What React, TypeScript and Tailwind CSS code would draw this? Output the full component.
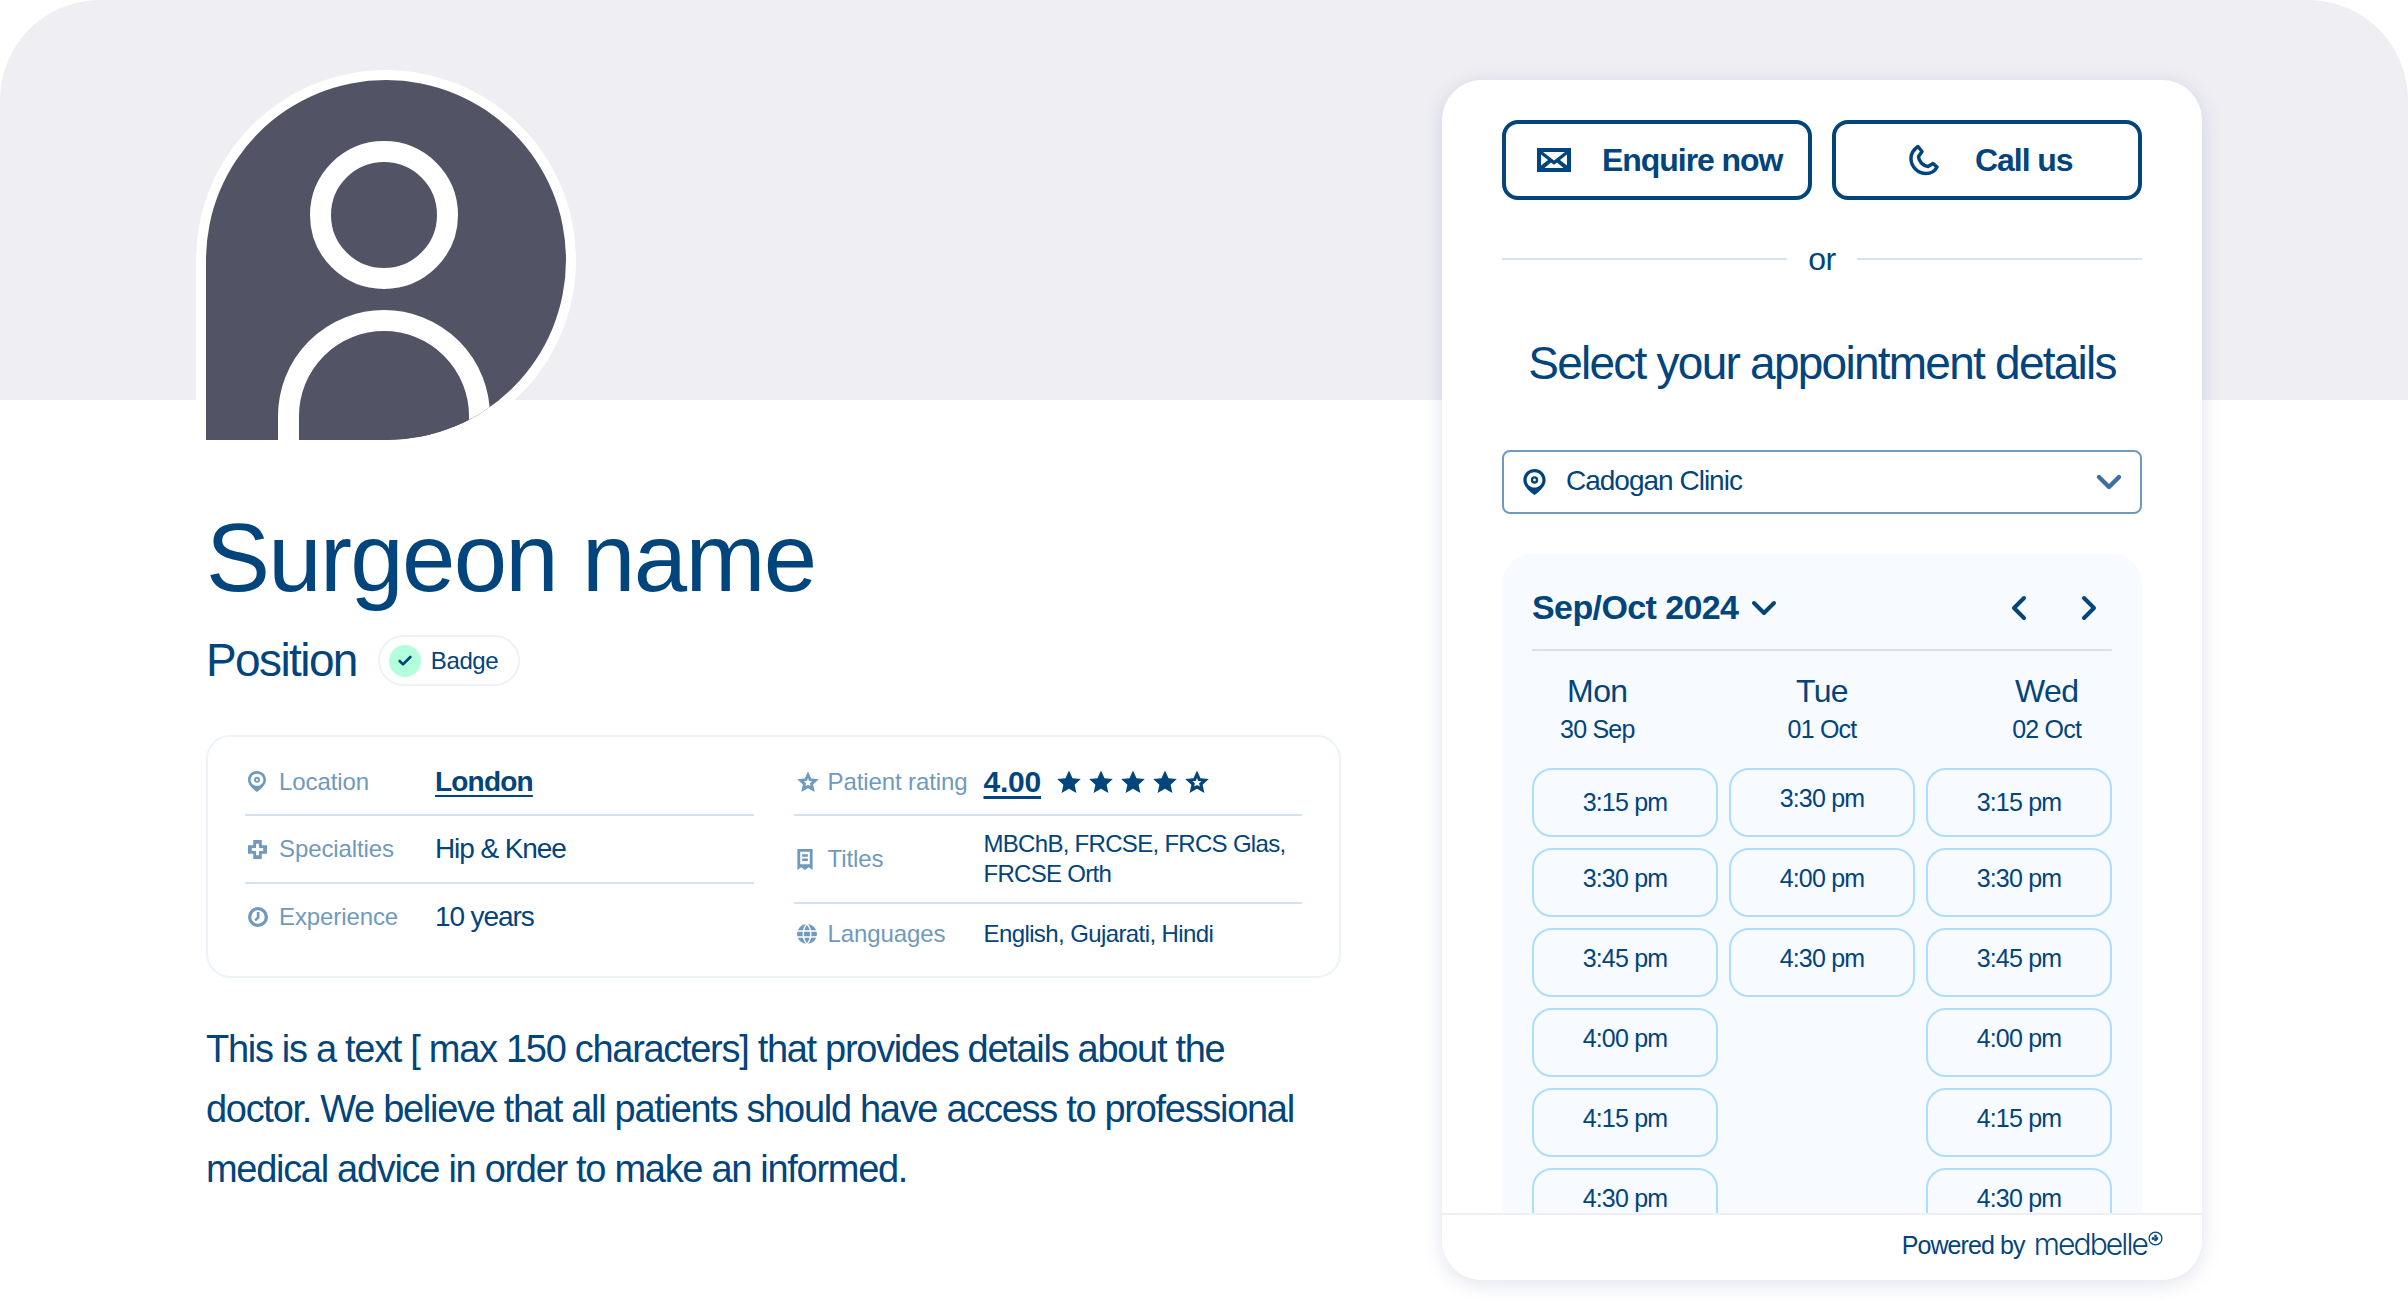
import React from 'react'
import { Check, ChevronDown, ChevronLeft, ChevronRight } from 'lucide-react'

const font = { fontFamily: '"Liberation Sans", Arial, sans-serif' }

const mon = ['3:15 pm', '3:30 pm', '3:45 pm', '4:00 pm', '4:15 pm', '4:30 pm']
const tue = ['3:30 pm', '4:00 pm', '4:30 pm']

function Pin({ className }: { className?: string }) {
  return (
    <svg viewBox="0 0 24 28" className={className}>
      <path fillRule="evenodd" fill="currentColor" d="M12 0C5.400 0 0 5.200 0 11.800 0 18 5.500 23.500 12 28c6.500-4.500 12-10 12-16.200C24 5.200 18.600 0 12 0Zm0 3.500c4.700 0 8.500 3.700 8.500 8.300S16.700 20 12 20s-8.500-3.600-8.500-8.200S7.300 3.500 12 3.500Z" />
      <circle cx="12" cy="11.800" r="4" fill="currentColor" />
      <circle cx="12" cy="11.800" r="1.500" fill="white" />
    </svg>
  )
}

function Cross() {
  return (
    <svg viewBox="0 0 20 20" className="w-[19px] h-[19px] shrink-0 text-[#7099be]">
      <path fillRule="evenodd" fill="currentColor" d="M5.500 0h9v5.500H20v9h-5.500V20h-9v-5.500H0v-9h5.500V0Zm3 4v4.500H4v3h4.500V16h3v-4.500H16v-3h-4.500V4h-3Z" />
    </svg>
  )
}

function Clock() {
  return (
    <svg viewBox="0 0 20 20" className="w-[20px] h-[20px] shrink-0 text-[#7099be]">
      <path fillRule="evenodd" fill="currentColor" d="M10 0a10 10 0 1 1 0 20 10 10 0 0 1 0-20Zm0 3.300a6.700 6.700 0 1 0 0 13.400 6.700 6.700 0 0 0 0-13.400ZM11.500 5v6l-3.500 3.200-1.700-1.800L8.800 10V5h2.700Z" />
    </svg>
  )
}

function Star({ hollow, className }: { hollow?: boolean; className?: string }) {
  return (
    <svg viewBox="0 0 24 24" className={className}>
      <path fill="currentColor" d="M12 .5l3.500 7.700 8.300.9-6.200 5.600 1.800 8.300-7.400-4.200-7.400 4.200 1.800-8.300L.2 9.100l8.300-.9L12 .5Z" />
      {hollow && <path fill="white" d="M12 8l1.300 2.900 3.200.3-2.400 2.100.7 3.200L12 14.900l-2.800 1.600.7-3.200-2.400-2.100 3.200-.3L12 8Z" />}
    </svg>
  )
}

function Receipt() {
  return (
    <svg viewBox="0 0 16 22" className="w-[16px] h-[21px] shrink-0 text-[#7099be]">
      <path fillRule="evenodd" fill="currentColor" d="M0 0h16v22l-4-3-4 3-4-3-4 3V0Zm3 3v13h10V3H3Zm2 2.500h6v2.500H5V5.500Zm0 4.500h6v2.500H5V10Z" />
    </svg>
  )
}

function GlobeIcon() {
  return (
    <svg viewBox="0 0 20 20" className="w-[20px] h-[20px] shrink-0 text-[#7099be]">
      <circle cx="10" cy="10" r="10" fill="currentColor" />
      <path d="M0 7h20M0 13h20M10 0c-5 5-5 15 0 20M10 0c5 5 5 15 0 20" fill="none" stroke="white" strokeWidth="1.400" />
    </svg>
  )
}

function Avatar() {
  return (
    <svg viewBox="195 70 381 380" className="w-[381px] h-[380px] block -ml-[11px] shrink-0">
      <defs>
        <clipPath id="shape">
          <path d="M206 440V260a180 180 0 1 1 180 180Z" />
        </clipPath>
      </defs>
      <path fill="white" d="M196 450V260a190 190 0 1 1 190 190Z" />
      <path fill="#525364" d="M206 440V260a180 180 0 1 1 180 180Z" />
      <circle cx="384" cy="215" r="63.500" fill="none" stroke="white" strokeWidth="21" />
      <path d="M288.500 450V416a95.500 95.500 0 0 1 191 0V450" fill="#525364" stroke="white" strokeWidth="21" clipPath="url(#shape)" />
    </svg>
  )
}

function Row({ icon, label, children, className }: { icon: React.ReactNode; label: string; children: React.ReactNode; className?: string }) {
  return (
    <div className={`flex items-center ${className ?? ''}`}>
      <div className="w-[34px] pl-[3px] flex items-center shrink-0">{icon}</div>
      <div className="w-[156px] shrink-0 text-[24px] text-[#7099be] tracking-[-0.1px]">{label}</div>
      {children}
    </div>
  )
}

function Slot({ time, centered }: { time: string; centered?: boolean }) {
  return (
    <div className={`h-[69px] rounded-[20px] border-2 border-[#aeddff] flex items-center justify-center text-[25px] tracking-[-0.8px] shrink-0 ${centered ? '' : 'pb-[8px]'}`}>
      {time}
    </div>
  )
}

export default function App() {
  return (
    <div style={font} className="w-[2408px] h-[1300px] overflow-hidden rounded-t-[100px] bg-[linear-gradient(#eeeef3_400px,#ffffff_400px)] text-[#02447c] flex pt-[70px] pl-[206px]">
      <div className="w-[1135px] shrink-0 flex flex-col">
        <Avatar />
        <h1 className="text-[96px] leading-[110px] mt-[53px] tracking-[-1.7px]">Surgeon name</h1>
        <div className="flex items-center mt-[22px] h-[51px]">
          <span className="text-[46px] tracking-[-1.6px]">Position</span>
          <div className="ml-[21px] w-[142px] h-[51px] rounded-full border-2 border-[#edf2f7] flex items-center pl-[9px]">
            <span className="w-[32px] h-[32px] rounded-full bg-[#b3ffdc] flex items-center justify-center">
              <Check size={16} strokeWidth={4} />
            </span>
            <span className="ml-[10px] text-[24px] tracking-[-0.4px]">Badge</span>
          </div>
        </div>
        <div className="mt-[49px] h-[243px] rounded-[24px] border-2 border-[#edf3f7] grid grid-cols-2 gap-x-[40px] px-[37px]">
          <div className="flex flex-col">
            <Row className="h-[79px] pt-[12px] border-b-2 border-[#d6e2ef]" icon={<Pin className="w-[18px] h-[21px] text-[#7099be]" />} label="Location">
              <a className="text-[28px] font-bold underline underline-offset-4 tracking-[-0.8px]">London</a>
            </Row>
            <Row className="h-[68px] border-b-2 border-[#d6e2ef]" icon={<Cross />} label="Specialties">
              <span className="text-[28px] tracking-[-1.1px]">Hip &amp; Knee</span>
            </Row>
            <Row className="h-[66px]" icon={<Clock />} label="Experience">
              <span className="text-[28px] tracking-[-1.1px]">10 years</span>
            </Row>
          </div>
          <div className="flex flex-col">
            <Row className="h-[79px] pt-[12px] border-b-2 border-[#d6e2ef]" icon={<Star hollow className="w-[22px] h-[22px] text-[#7099be]" />} label="Patient rating">
              <a className="text-[30px] font-bold underline underline-offset-4 tracking-[-0.2px]">4.00</a>
              <div className="flex gap-[8px] ml-[16px]">
                <Star className="w-[24px] h-[24px]" />
                <Star className="w-[24px] h-[24px]" />
                <Star className="w-[24px] h-[24px]" />
                <Star className="w-[24px] h-[24px]" />
                <Star hollow className="w-[24px] h-[24px]" />
              </div>
            </Row>
            <Row className="h-[88px] border-b-2 border-[#d6e2ef]" icon={<Receipt />} label="Titles">
              <span className="text-[24px] leading-[30px] tracking-[-0.7px]">MBChB, FRCSE, FRCS Glas,<br />FRCSE Orth</span>
            </Row>
            <Row className="h-[60px]" icon={<GlobeIcon />} label="Languages">
              <span className="text-[24px] tracking-[-0.6px]">English, Gujarati, Hindi</span>
            </Row>
          </div>
        </div>
        <p className="mt-[41px] text-[38px] leading-[60px] tracking-[-1.3px]">
          This is a text [ max 150 characters] that provides details about the<br />
          doctor. We believe that all patients should have access to professional<br />
          medical advice in order to make an informed.
        </p>
      </div>

      <div className="ml-[101px] mt-[10px] w-[760px] h-[1200px] shrink-0 bg-white rounded-[40px] shadow-[0_4px_20px_rgba(60,80,130,0.16)] flex flex-col overflow-hidden">
        <div className="flex-1 min-h-0 overflow-hidden px-[60px] pt-[40px]">
          <div className="flex gap-[20px]">
            <button className="w-[310px] h-[80px] rounded-[16px] border-4 border-[#02447c] flex items-center pl-[31px] text-[32px] font-bold tracking-[-1.05px]">
              <svg viewBox="0 0 34 24" className="w-[34px] h-[24px] shrink-0 mr-[31px]">
                <path fillRule="evenodd" fill="currentColor" d="M0 0h34v24H0V0Zm6 4 11 8.500L28 4H6ZM4 6.500v11L11 12 4 6.500Zm26 0L23 12l7 5.500v-11ZM14 14.500 7.500 20h19L20 14.500l-3 2.300-3-2.300Z" />
              </svg>
              Enquire now
            </button>
            <button className="w-[310px] h-[80px] rounded-[16px] border-4 border-[#02447c] flex items-center pl-[73px] text-[32px] font-bold tracking-[-1.05px]">
              <svg viewBox="0 0 30 32" className="w-[30px] h-[32px] shrink-0 mr-[36px]" fill="none" stroke="currentColor" strokeWidth="3.500" strokeLinejoin="round">
                <path d="M9 2.500C4 6 1.800 10 2 15c.3 8 7 14.500 15 14.500 5 0 9-2.500 11-6.500l-4-3.500-5 3c-5-.5-9.500-5.500-9.500-10l3.500-5Z" />
              </svg>
              Call us
            </button>
          </div>
          <div className="flex items-center mt-[38px] h-[42px]">
            <div className="flex-1 h-[2px] bg-[#d6e2ef]"></div>
            <span className="w-[70px] text-center text-[32px] tracking-[-0.5px]">or</span>
            <div className="flex-1 h-[2px] bg-[#d6e2ef]"></div>
          </div>
          <h2 className="text-center text-[46px] leading-[60px] mt-[53px] tracking-[-1.75px]">Select your appointment details</h2>
          <div className="mt-[57px] h-[64px] rounded-[8px] border-2 border-[#6f9abf] flex items-center pl-[19px] pr-[11px]">
            <Pin className="w-[23px] h-[26px] shrink-0" />
            <span className="ml-[20px] text-[28px] tracking-[-1px] -mt-[2px]">Cadogan Clinic</span>
            <ChevronDown size={40} strokeWidth={2.6} className="ml-auto text-[#3d70a0]" />
          </div>
          <div className="mt-[40px] h-[700px] rounded-[30px] bg-[#f7faff] px-[30px]">
            <div className="h-[97px] pt-[12px] border-b-2 border-[#d6e2ef] flex items-center">
              <span className="text-[34px] font-bold tracking-[-0.6px]">Sep/Oct 2024</span>
              <ChevronDown size={40} strokeWidth={2.4} className="ml-[6px]" />
              <ChevronLeft size={40} strokeWidth={2.4} className="ml-auto" />
              <ChevronRight size={40} strokeWidth={2.4} className="ml-[30px] mr-[3px]" />
            </div>
            <div className="grid grid-cols-3 -mx-[47px] mt-[20px] text-center">
              {[['Mon', '30 Sep'], ['Tue', '01 Oct'], ['Wed', '02 Oct']].map(([d, n]) => (
                <div key={d} className="flex flex-col">
                  <span className="text-[32px] leading-[40px] tracking-[-0.6px]">{d}</span>
                  <span className="text-[25px] leading-[36px] tracking-[-0.8px]">{n}</span>
                </div>
              ))}
            </div>
            <div className="grid grid-cols-3 gap-x-[11px] mt-[21px]">
              <div className="flex flex-col gap-[11px]">{mon.map((t, i) => <Slot key={t} time={t} centered={i === 0} />)}</div>
              <div className="flex flex-col gap-[11px]">{tue.map((t) => <Slot key={t} time={t} />)}</div>
              <div className="flex flex-col gap-[11px]">{mon.map((t, i) => <Slot key={t} time={t} centered={i === 0} />)}</div>
            </div>
          </div>
        </div>
        <div className="h-[67px] shrink-0 border-t-2 border-[#eeeef3] bg-white flex items-center justify-end pr-[39px] pb-[8px]">
          <span className="text-[25px] tracking-[-0.9px] mt-[4px]">Powered by</span>
          <span className="ml-[9px] text-[30px] font-light tracking-[-1.9px] leading-none" style={{ fontFamily: 'Inter, sans-serif' }}>medbelle</span>
          <svg viewBox="0 0 14 14" className="w-[15px] h-[15px] ml-[1px] -mt-[10px]">
            <circle cx="7" cy="7" r="6" fill="none" stroke="currentColor" strokeWidth="1.200" />
            <path d="M7 3.500v7M3.500 7h7" stroke="currentColor" strokeWidth="2.200" strokeDasharray="2.500 1" />
          </svg>
        </div>
      </div>
    </div>
  )
}
